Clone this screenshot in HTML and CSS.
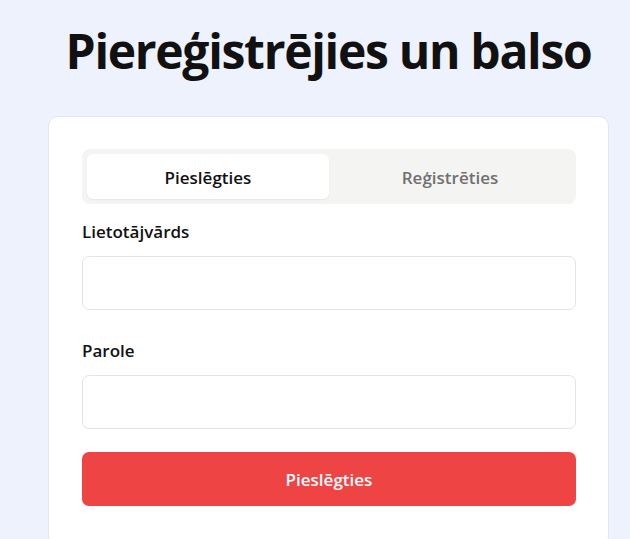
FILE: index.html
```html
<!DOCTYPE html>
<html lang="lv">
<head>
<meta charset="utf-8">
<link rel="stylesheet" href="styles.css">
</head>
<body>
<main class="page">
  <h1 class="title">Piereģistrējies un balso</h1>
  <section class="card">
    <div class="tabs">
      <button class="tab tab-active">Pieslēgties</button>
      <button class="tab">Reģistrēties</button>
    </div>
    <form class="form">
      <div class="field">
        <label class="label">Lietotājvārds</label>
        <input class="input" type="text">
      </div>
      <div class="field">
        <label class="label">Parole</label>
        <input class="input" type="password">
      </div>
      <button class="submit" type="button">Pieslēgties</button>
    </form>
  </section>
</main>
</body>
</html>
```
FILE: styles.css
```css
* { box-sizing: border-box; }
html, body { margin: 0; padding: 0; }
body {
  background: #eef2fd;
  font-family: "Open Sans", "Noto Sans", sans-serif;
  color: #111;
  height: 539px;
  overflow: hidden;
}
.page {
  width: 561px;
  margin-left: 48px;
  display: flex;
  flex-direction: column;
  align-items: center;
}
.title {
  margin: 18px 0 0 0;
  font-size: 48px;
  font-weight: 700;
  line-height: 66px;
  letter-spacing: -1.3px;
  color: #111;
  white-space: nowrap;
}
.card {
  margin-top: 32px;
  width: 561px;
  background: #fff;
  border: 1px solid #e3e6ee;
  border-radius: 10px;
  padding: 32px 32px 40px 33px;
}
.tabs {
  display: grid;
  grid-template-columns: 1fr 1fr;
  background: #f4f4f2;
  border-radius: 8px;
  padding: 5px;
  height: 55px;
}
.tab {
  border: none;
  background: transparent;
  font-family: inherit;
  font-size: 17px;
  font-weight: 600;
  color: #707070;
  border-radius: 6px;
  padding-top: 2px;
}
.tab-active {
  background: #fff;
  color: #111;
  box-shadow: 0 1px 2px rgba(0,0,0,0.06);
}
.form {
  display: flex;
  flex-direction: column;
}
.field {
  display: flex;
  flex-direction: column;
}
.label {
  margin-top: 16px;
  font-size: 17px;
  font-weight: 600;
  line-height: 24px;
  color: #111;
}
.field + .field .label { margin-top: 29px; }
.input {
  margin-top: 12px;
  height: 54px;
  border: 1px solid #e3e3e3;
  border-radius: 7px;
  background: #fff;
}
.submit {
  margin-top: 23px;
  height: 54px;
  border: none;
  border-radius: 7px;
  background: #ef4444;
  color: #fff;
  font-family: inherit;
  font-size: 17px;
  font-weight: 600;
}
```
